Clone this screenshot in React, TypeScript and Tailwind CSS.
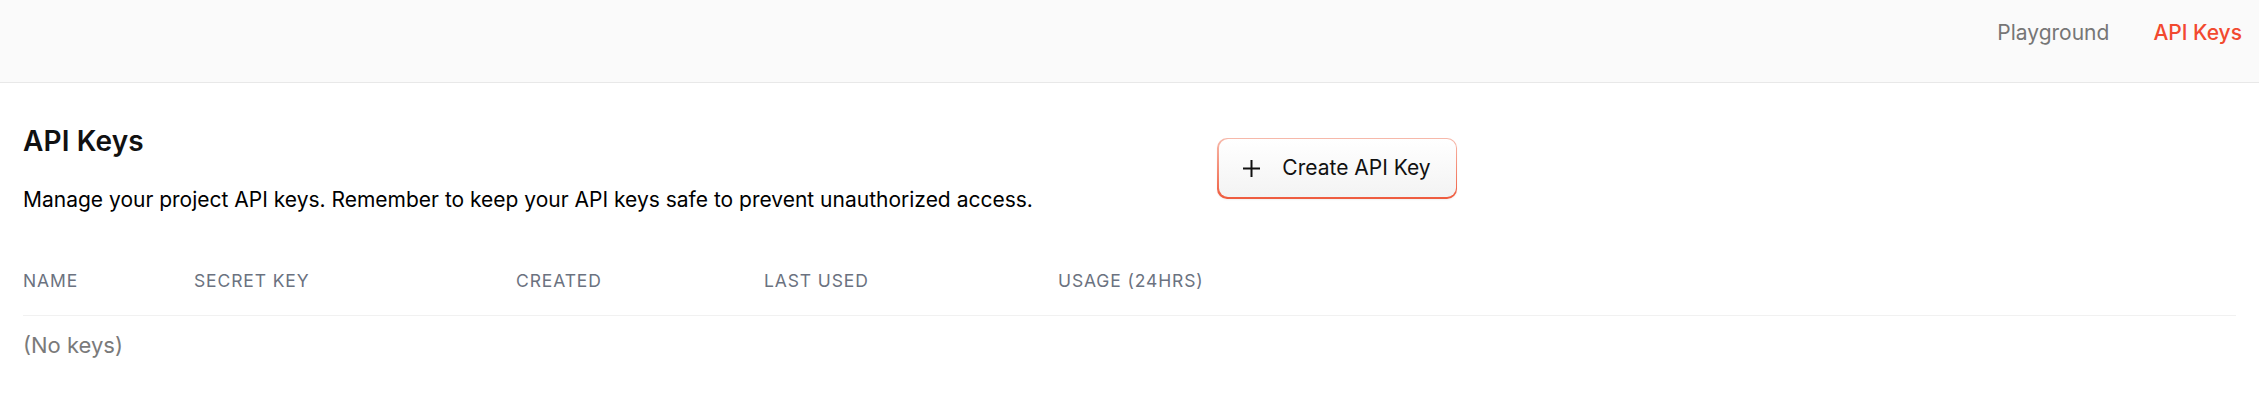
import React from "react";

const columns = [
  { label: "Name", width: "w-[171px]" },
  { label: "Secret Key", width: "w-[322px]" },
  { label: "Created", width: "w-[248px]" },
  { label: "Last Used", width: "w-[294px]" },
  { label: "Usage (24hrs)", width: "w-[200px]" },
];

const PlusIcon = () => (
  <svg width="17" height="17" viewBox="0 0 17 17" fill="none" stroke="#111" strokeWidth="2" strokeLinecap="square">
    <line x1="8.5" y1="1" x2="8.5" y2="16" />
    <line x1="1" y1="8.5" x2="16" y2="8.5" />
  </svg>
);

export default function App() {
  return (
    <div className="min-h-[393px] w-full bg-white font-['Inter',sans-serif] text-[#111]">
      <header className="flex h-[83px] items-start justify-end gap-[44px] border-b border-[#e8e8e8] bg-[#fafafa] pr-[17px] pt-[19px] text-[21px] leading-[28px]">
        <a className="text-[#767676]">Playground</a>
        <a className="font-medium text-[#f2492f]">API Keys</a>
      </header>

      <main className="px-[23px]">
        <div className="flex w-[1434px] items-center justify-between pt-[40px]">
          <div>
            <h1 className="text-[28px] font-semibold leading-[36px] tracking-[0.005em]">API Keys</h1>
            <p className="mt-[25px] text-[21px] leading-[32px] text-black">
              Manage your project API keys. Remember to keep your API keys safe to prevent unauthorized access.
            </p>
          </div>
          <button className="-mt-[3px] rounded-[10px] bg-gradient-to-b from-[#f6b9ab] to-[#ee5a3d] p-[1.5px] shadow-[0_1px_2px_rgba(0,0,0,0.06)]">
            <span className="flex h-[58px] w-[237px] items-center justify-center gap-[22px] rounded-[9px] bg-gradient-to-b from-white to-[#f3f3f3] text-[21px] leading-[28px]">
              <PlusIcon />
              Create API Key
            </span>
          </button>
        </div>

        <div className="mt-[53px]">
          <div className="flex border-b border-[#f1f1f1] pb-[22px]">
            {columns.map((c) => (
              <div
                key={c.label}
                className={`${c.width} text-[17.5px] font-normal uppercase leading-[24px] tracking-[0.05em] text-[#6b7280]`}
              >
                {c.label}
              </div>
            ))}
          </div>
          <div className="pt-[13px] text-[22px] leading-[32px] text-[#7a7a7a]">(No keys)</div>
        </div>
      </main>
    </div>
  );
}
